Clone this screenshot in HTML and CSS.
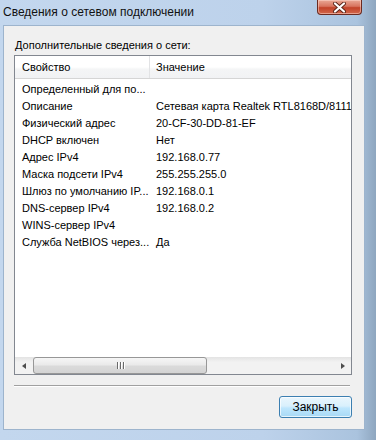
FILE: index.html
```html
<!DOCTYPE html>
<html lang="ru">
<head>
    <meta charset="UTF-8">
    <title>Сведения о сетевом подключении</title>
    <link rel="stylesheet" href="styles.css">
</head>
<body>
    <div class="window">
        <div class="titlebar">
            <span class="title">Сведения о сетевом подключении</span>
            <div class="close-btn">
                <svg width="15" height="11" viewBox="0 0 15 11">
                    <path d="M3 1.5 L12 9.5 M12 1.5 L3 9.5" stroke="#5a2418" stroke-width="4" stroke-linecap="round"/>
                    <path d="M3 1.5 L12 9.5 M12 1.5 L3 9.5" stroke="#fff" stroke-width="2.2" stroke-linecap="round"/>
                </svg>
            </div>
        </div>

        <div class="client">
            <div class="caption">Дополнительные сведения о сети:</div>

            <div class="listview">
                <div class="lv-header">
                    <div class="col col-name">Свойство</div>
                    <div class="col col-value">Значение</div>
                </div>
                <div class="lv-body">
                    <div class="row"><span>Определенный для по...</span><span></span></div>
                    <div class="row"><span>Описание</span><span>Сетевая карта Realtek RTL8168D/8111</span></div>
                    <div class="row"><span>Физический адрес</span><span>20-CF-30-DD-81-EF</span></div>
                    <div class="row"><span>DHCP включен</span><span>Нет</span></div>
                    <div class="row"><span>Адрес IPv4</span><span>192.168.0.77</span></div>
                    <div class="row"><span>Маска подсети IPv4</span><span>255.255.255.0</span></div>
                    <div class="row"><span>Шлюз по умолчанию IP...</span><span>192.168.0.1</span></div>
                    <div class="row"><span>DNS-сервер IPv4</span><span>192.168.0.2</span></div>
                    <div class="row"><span>WINS-сервер IPv4</span><span></span></div>
                    <div class="row"><span>Служба NetBIOS через...</span><span>Да</span></div>
                </div>
                <div class="hscroll">
                    <div class="arrow arrow-left"></div>
                    <div class="track">
                        <div class="thumb"><span class="grip"></span><span class="grip"></span><span class="grip"></span></div>
                    </div>
                    <div class="arrow arrow-right"></div>
                </div>
            </div>

            <div class="separator"></div>

            <div class="actions">
                <button class="btn-close">Закрыть</button>
            </div>
        </div>
    </div>
</body>
</html>
```

FILE: styles.css
```css
* {
    box-sizing: border-box;
}
body {
    margin: 0;
    font-family: "Liberation Sans", Arial, sans-serif;
    font-size: 11px;
    color: #000;
}
.window {
    width: 376px;
    height: 440px;
    display: flex;
    flex-direction: column;
    background: linear-gradient(to right, #c3d7ee 0%, #bdd2eb 70%, #aac3de 95%, #8ea6bf 100%);
    overflow: hidden;
}
.titlebar {
    height: 25px;
    display: flex;
    align-items: flex-start;
    padding-left: 3px;
}
.title {
    font-size: 12px;
    margin-top: 5px;
    color: #111;
}
.close-btn {
    margin-left: auto;
    margin-right: 14px;
    width: 45px;
    height: 15px;
    border: 1px solid #6b2a20;
    border-top: none;
    border-radius: 0 0 4px 4px;
    background: linear-gradient(to bottom, #e9a996 0%, #d8745f 45%, #c24329 55%, #d2674c 100%);
    box-shadow: inset 0 0 0 1px rgba(255, 220, 210, 0.5);
    display: flex;
    justify-content: center;
    align-items: center;
}
.client {
    flex: 1;
    margin: 0 11px 10px 3px;
    background: #f0f0f0;
    border: 1px solid #9db4cd;
    padding: 12px 12px 0 10px;
    display: flex;
    flex-direction: column;
}
.caption {
    height: 17px;
    line-height: 15px;
    padding-left: 1px;
}
.listview {
    height: 320px;
    background: #fff;
    border: 1px solid #828790;
    display: flex;
    flex-direction: column;
    overflow: hidden;
    white-space: nowrap;
}
.lv-header {
    height: 23px;
    display: grid;
    grid-template-columns: 135px 1fr;
    background: linear-gradient(to bottom, #fff 0%, #fff 50%, #f4f5f6 60%, #f1f2f4 100%);
    border-bottom: 1px solid #d5d5d5;
}
.col {
    line-height: 22px;
    padding-left: 7px;
}
.col-name {
    border-right: 1px solid #e2e3e5;
}
.col-value {
    padding-left: 6px;
}
.lv-body {
    flex: 1;
    padding-top: 2px;
}
.row {
    display: grid;
    grid-template-columns: 134px 1fr;
    height: 17px;
    line-height: 17px;
    padding-left: 7px;
}
.hscroll {
    height: 17px;
    display: flex;
    background: linear-gradient(to bottom, #e3e3e3 0%, #f2f2f2 30%, #f2f2f2 100%);
}
.arrow {
    width: 17px;
    display: flex;
    justify-content: center;
    align-items: center;
}
.arrow-left::before {
    content: "";
    border-style: solid;
    border-width: 3.5px 4px 3.5px 0;
    border-color: transparent #4d4d4d transparent transparent;
}
.arrow-right::before {
    content: "";
    border-style: solid;
    border-width: 3.5px 0 3.5px 4px;
    border-color: transparent transparent transparent #4d4d4d;
}
.track {
    flex: 1;
    padding: 0 1px;
}
.thumb {
    width: 174px;
    height: 17px;
    border: 1px solid #979797;
    border-radius: 3px;
    background: linear-gradient(to bottom, #f6f6f6 0%, #eaeaea 45%, #dadada 55%, #d4d4d4 100%);
    display: flex;
    justify-content: center;
    align-items: center;
    gap: 2px;
}
.grip {
    width: 1px;
    height: 7px;
    background: #6a6a6a;
    box-shadow: 1px 0 0 #fff;
}
.separator {
    height: 2px;
    margin: 10px 2px 0 0;
    border-top: 1px solid #a0a0a0;
    border-bottom: 1px solid #fff;
}
.actions {
    display: flex;
    justify-content: flex-end;
    padding-top: 9px;
}
.btn-close {
    width: 73px;
    height: 22px;
    font-family: inherit;
    font-size: 12px;
    color: #000;
    border: 1px solid #3c7fb1;
    border-radius: 3px;
    background: linear-gradient(to bottom, #eaf6fd 0%, #d9f0fc 45%, #bee6fd 55%, #a7d9f5 100%);
    box-shadow: inset 0 0 0 1px rgba(255, 255, 255, 0.7);
    padding: 0;
}
```
